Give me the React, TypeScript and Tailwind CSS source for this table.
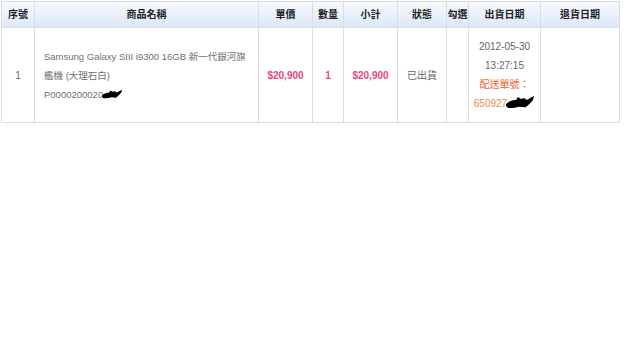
const HEADERS = [
  { label: "序號", w: "w-[33px]" },
  { label: "商品名稱", w: "w-[224px]" },
  { label: "單價", w: "w-[54px]" },
  { label: "數量", w: "w-[31px]" },
  { label: "小計", w: "w-[54px]" },
  { label: "狀態", w: "w-[49px]" },
  { label: "勾選", w: "w-[22px]" },
  { label: "出貨日期", w: "w-[72px]" },
  { label: "退貨日期", w: "w-[79px]" },
];

function Scribble({ className }: { className?: string }) {
  return (
    <svg viewBox="0 0 30 14" className={className} aria-hidden>
      <path
        d="M1 9 C4 6 8 5 11 5 L13 2 L16 4 L19 3 L22 5 C24 4 26 2 29 1 L28 5 C26 7 24 10 21 12 C18 13 16 11 13 12 C10 13 6 13 3 13 L1 11 Z"
        fill="#000"
      />
    </svg>
  );
}

export default function App() {
  const cell = "border border-[#dcdcdc] align-middle";
  return (
    <div className="w-[640px] h-[361px] bg-white font-['Liberation_Sans','Noto_Sans_CJK_TC',sans-serif] text-[10px] text-[#666]">
      <table className="table-fixed border-collapse ml-px mt-px w-[618px]">
        <thead>
          <tr className="h-[26px] bg-gradient-to-b from-[#f7fafe] to-[#dbe7f7]">
            {HEADERS.map((h) => (
              <th
                key={h.label}
                className={`${h.w} ${cell} text-center font-bold text-[#222] text-[10px] p-0`}
              >
                {h.label}
              </th>
            ))}
          </tr>
        </thead>
        <tbody>
          <tr className="h-[95px]">
            <td className={`${cell} text-center`}>1</td>
            <td className={`${cell} pl-[9px] pr-0 leading-[19px] whitespace-nowrap text-[9.5px] text-[#707070]`}>
              <div>Samsung Galaxy SIII i9300 16GB 新一代銀河旗</div>
              <div>艦機 (大理石白)</div>
              <div className="flex items-center">
                P0000200020
                <Scribble className="w-[22px] h-[10px] -ml-[2px]" />
              </div>
            </td>
            <td className={`${cell} text-center font-bold text-[#e8457c]`}>$20,900</td>
            <td className={`${cell} text-center font-bold text-[#e8457c]`}>1</td>
            <td className={`${cell} text-center font-bold text-[#e8457c]`}>$20,900</td>
            <td className={`${cell} text-center`}>已出貨</td>
            <td className={cell}></td>
            <td className={`${cell} text-center leading-[19px]`}>
              <div>2012-05-30</div>
              <div>13:27:15</div>
              <div className="text-[#f0601c]">配送單號：</div>
              <div className="flex items-center justify-center text-[#f58a4a]">
                650927
                <Scribble className="w-[30px] h-[14px] -ml-[2px] -mt-[4px]" />
              </div>
            </td>
            <td className={cell}></td>
          </tr>
        </tbody>
      </table>
    </div>
  );
}
